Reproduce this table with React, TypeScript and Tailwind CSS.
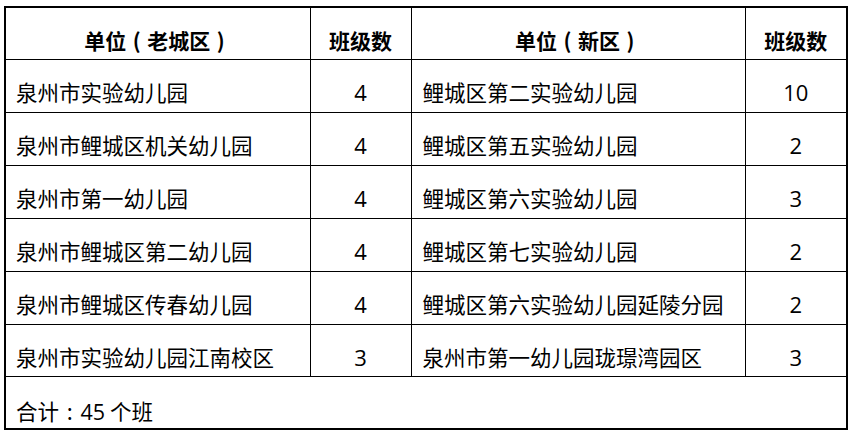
const rows: [string, string, string, string][] = [
  ["泉州市实验幼儿园", "4", "鲤城区第二实验幼儿园", "10"],
  ["泉州市鲤城区机关幼儿园", "4", "鲤城区第五实验幼儿园", "2"],
  ["泉州市第一幼儿园", "4", "鲤城区第六实验幼儿园", "3"],
  ["泉州市鲤城区第二幼儿园", "4", "鲤城区第七实验幼儿园", "2"],
  ["泉州市鲤城区传春幼儿园", "4", "鲤城区第六实验幼儿园延陵分园", "2"],
  ["泉州市实验幼儿园江南校区", "3", "泉州市第一幼儿园珑璟湾园区", "3"],
];

const cjk = "font-['Microsoft_YaHei','Noto_Sans_CJK_SC',sans-serif]";
const num = "font-['Open_Sans','Liberation_Sans',sans-serif]";

function Punct({ ch }: { ch: string }) {
  return <span className="inline-block w-[1em] text-center">{ch}</span>;
}

export default function App() {
  return (
    <div className="h-[432px] w-[850px] bg-white pl-[4px] pt-[6px] text-black">
      <table className="border-collapse border-2 border-black">
        <colgroup>
          <col className="w-[305px]" />
          <col className="w-[101px]" />
          <col className="w-[334px]" />
          <col className="w-[102px]" />
        </colgroup>
        <thead>
          <tr className={`h-[52px] ${cjk} text-[21px] font-bold`}>
            <th className="border border-black pt-[14px] text-center">
              单位<Punct ch="(" />老城区<Punct ch=")" />
            </th>
            <th className="border border-black pt-[14px] text-center">班级数</th>
            <th className="border border-black pt-[14px] text-center">
              单位<Punct ch="(" />新区<Punct ch=")" />
            </th>
            <th className="border border-black pt-[14px] text-center">班级数</th>
          </tr>
        </thead>
        <tbody>
          {rows.map((r, i) => (
            <tr key={i} className={i === 5 ? "h-[52px]" : "h-[53px]"}>
              <td className={`border border-black pl-[10px] pt-[14px] text-[21.5px] ${cjk}`}>{r[0]}</td>
              <td className={`border border-black pt-[14px] text-center text-[22px] ${num}`}>{r[1]}</td>
              <td className={`border border-black pl-[11px] pt-[14px] text-[21.5px] ${cjk}`}>{r[2]}</td>
              <td className={`border border-black pt-[14px] text-center text-[22px] ${num}`}>{r[3]}</td>
            </tr>
          ))}
          <tr className="h-[52px]">
            <td colSpan={4} className={`border border-black pl-[10px] pt-[18px] text-[21.5px] ${cjk}`}>
              合计<Punct ch=":" />
              <span className={num}>45</span> 个班
            </td>
          </tr>
        </tbody>
      </table>
    </div>
  );
}
